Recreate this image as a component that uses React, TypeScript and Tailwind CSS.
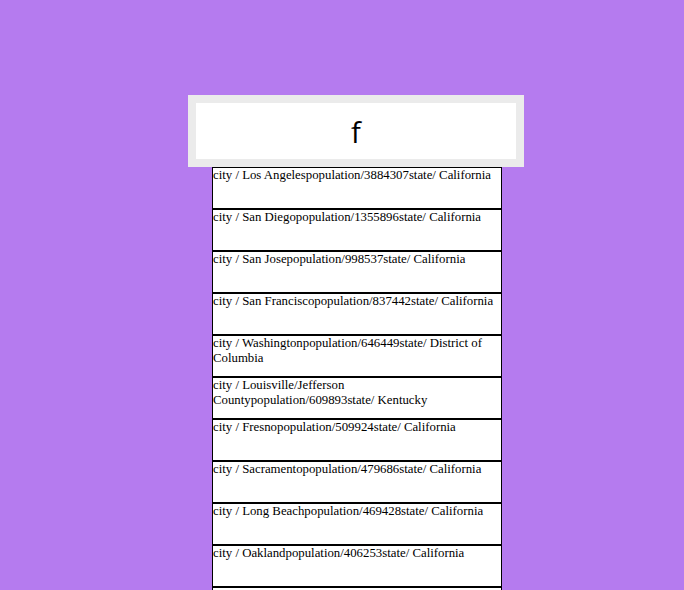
import React from "react";

const cities = [
  { city: "Los Angeles", population: "3884307", state: "California" },
  { city: "San Diego", population: "1355896", state: "California" },
  { city: "San Jose", population: "998537", state: "California" },
  { city: "San Francisco", population: "837442", state: "California" },
  { city: "Washington", population: "646449", state: "District of Columbia" },
  { city: "Louisville/Jefferson County", population: "609893", state: "Kentucky" },
  { city: "Fresno", population: "509924", state: "California" },
  { city: "Sacramento", population: "479686", state: "California" },
  { city: "Long Beach", population: "469428", state: "California" },
  { city: "Oakland", population: "406253", state: "California" },
  { city: "Bakersfield", population: "363630", state: "California" },
];

export default function App() {
  return (
    <div className="h-screen overflow-hidden bg-[#b57bef] pt-[95px]">
      <div className="ml-[188px] flex w-[336px] flex-col">
        {/* search box */}
        <input
          readOnly
          value="f"
          className="h-[72px] w-[336px] border-[8px] border-[#ebebeb] bg-white text-center text-[29px] text-black outline-none [font-family:'Open_Sans',sans-serif]"
        />
        <ul className="ml-[24px] w-[290px] [font-family:'Liberation_Serif',serif] text-[12.8px] leading-[15px] text-black">
          {cities.map((c) => (
            <li key={c.city} className="h-[42px] border border-black bg-white">
              city / {c.city}population/{c.population}state/ {c.state}
            </li>
          ))}
        </ul>
      </div>
    </div>
  );
}
